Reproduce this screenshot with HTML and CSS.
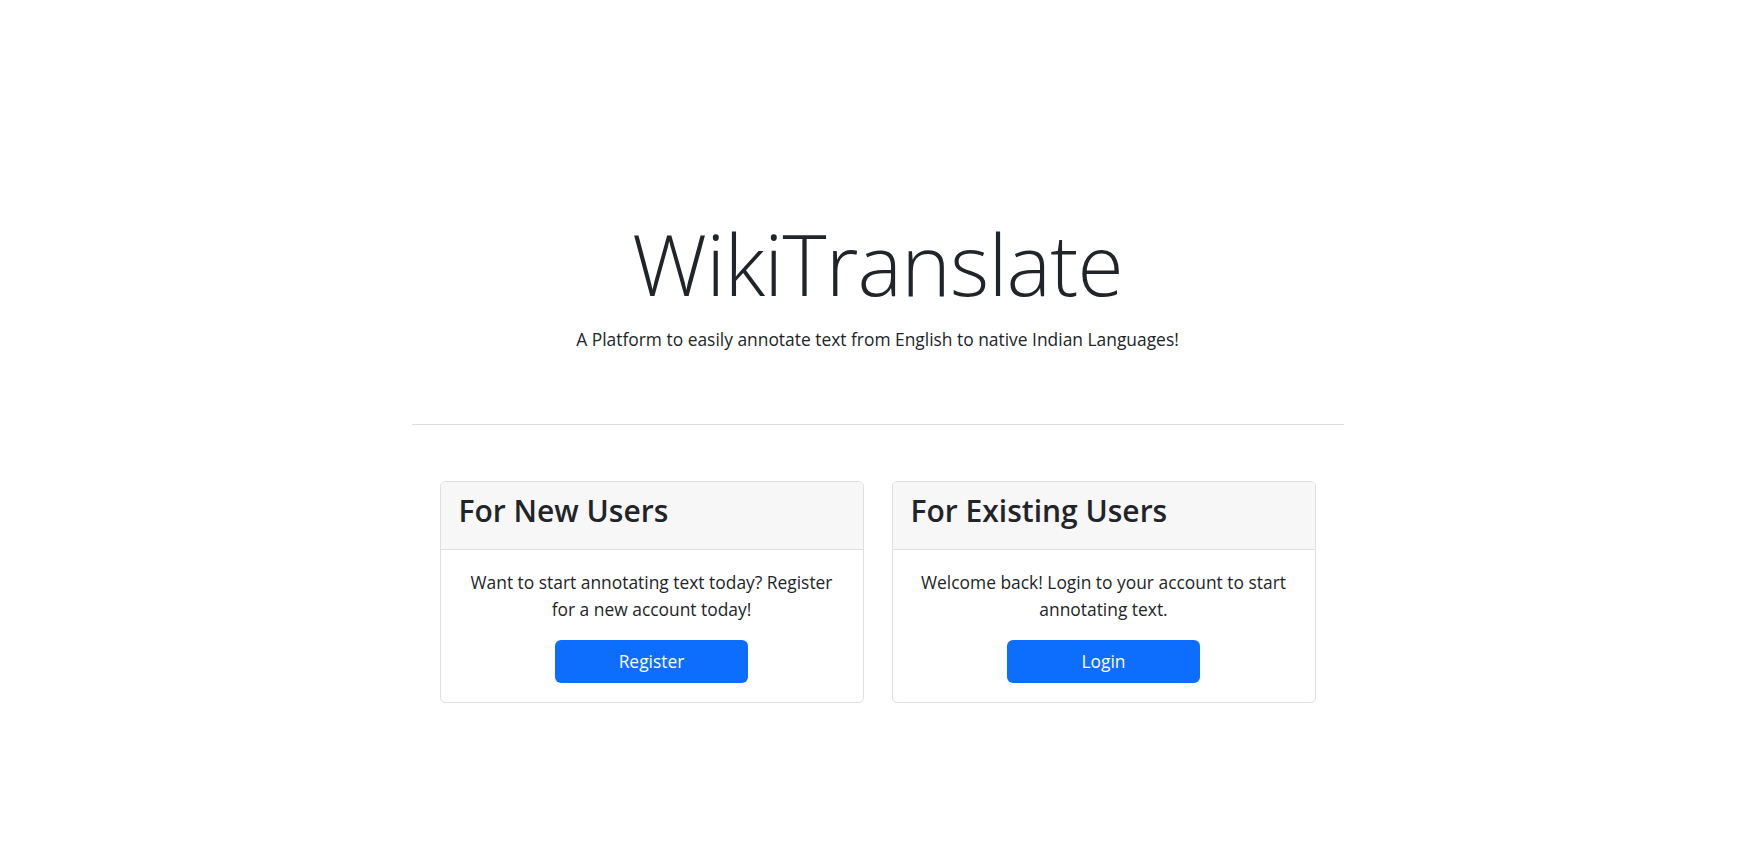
FILE: index.html
```html
<!DOCTYPE html>
<html lang="en">
<head>
<meta charset="utf-8">
<title>WikiTranslate</title>
<link rel="stylesheet" href="styles.css">
</head>
<body>
<main class="page">
  <header class="hero">
    <h1 class="hero-title">WikiTranslate</h1>
    <p class="hero-lead">A Platform to easily annotate text from English to native Indian Languages!</p>
  </header>
  <hr class="divider">
  <section class="cards">
    <div class="card">
      <div class="card-header"><h2 class="card-title">For New Users</h2></div>
      <div class="card-body">
        <p class="card-text">Want to start annotating text today? Register for a new account today!</p>
        <a class="btn" href="#">Register</a>
      </div>
    </div>
    <div class="card">
      <div class="card-header"><h2 class="card-title">For Existing Users</h2></div>
      <div class="card-body">
        <p class="card-text">Welcome back! Login to your account to start annotating text.</p>
        <a class="btn" href="#">Login</a>
      </div>
    </div>
  </section>
</main>
</body>
</html>
```

FILE: styles.css
```css
* { box-sizing: border-box; }
html, body { margin: 0; padding: 0; background: #fff; }
body {
  font-family: "Open Sans", "Noto Sans", sans-serif;
  color: #212529;
  font-size: 17px;
}
.page {
  width: 932px;
  margin: 0 auto;
  padding-top: 214px;
}
.hero { text-align: center; }
.hero-title {
  margin: 0;
  font-size: 84px;
  font-weight: 300;
  line-height: 100px;
  letter-spacing: -0.8px;
}
.hero-lead {
  margin: 12px 0 0;
  font-size: 17.4px;
  line-height: 26px;
}
.divider {
  margin: 72px 0 0;
  border: 0;
  border-top: 1px solid #dcdcdc;
  height: 0;
}
.cards {
  display: flex;
  justify-content: center;
  gap: 28px;
  margin-top: 56px;
}
.card {
  width: 424px;
  border: 1px solid #dfdfdf;
  border-radius: 5px;
  overflow: hidden;
}
.card-header {
  background: #f7f7f7;
  border-bottom: 1px solid #dfdfdf;
  height: 68px;
  padding: 0 18px 10px;
  display: flex;
  align-items: center;
}
.card-title {
  margin: 0;
  font-size: 30px;
  font-weight: 600;
  line-height: 1.2;
}
.card-body {
  padding: 19px 22px 19px;
  text-align: center;
}
.card-text {
  margin: 0 0 17px;
  font-size: 17.4px;
  line-height: 27px;
}
.btn {
  display: inline-block;
  width: 193px;
  height: 43px;
  line-height: 43px;
  background: #0d6efd;
  color: #fff;
  border-radius: 6px;
  text-decoration: none;
  font-size: 17.4px;
}
```
